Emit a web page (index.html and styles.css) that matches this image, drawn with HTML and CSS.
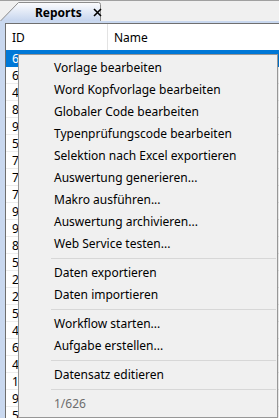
FILE: index.html
```html
<!DOCTYPE html>
<html lang="de">

<head>
    <meta charset="UTF-8">
    <meta name="viewport" content="width=device-width, initial-scale=1.0">
    <title>Reports</title>
    <link rel="stylesheet" href="styles.css">
</head>

<body>
    <div class="tabstrip">
        <div class="tab">
            <svg class="tab-shape" width="102" height="21" viewBox="0 0 102 21">
                <defs>
                    <linearGradient id="tabfill" x1="0" y1="0" x2="0" y2="1">
                        <stop offset="0" stop-color="#fdfdfe" />
                        <stop offset="1" stop-color="#c6d5ee" />
                    </linearGradient>
                </defs>
                <path d="M0.5 21 L18.5 2.5 H98.5 Q100.5 2.5 100.5 4.5 V21" fill="url(#tabfill)" stroke="#8c8c8c" />
            </svg>
            <span class="tab-title">Reports</span>
            <svg class="tab-close" width="9" height="9" viewBox="0 0 9 9">
                <path d="M1 1 L8 8 M8 1 L1 8" stroke="#000" stroke-width="1.6" />
            </svg>
        </div>
    </div>

    <div class="frame">
        <div class="grid">
            <div class="grid-head">
                <div class="col-id">ID</div>
                <div class="col-name">Name</div>
            </div>
            <div class="row selected"><span>6</span></div>
            <div class="row"><span>6</span></div>
            <div class="row"><span>4</span></div>
            <div class="row"><span>8</span></div>
            <div class="row"><span>9</span></div>
            <div class="row"><span>5</span></div>
            <div class="row"><span>7</span></div>
            <div class="row"><span>7</span></div>
            <div class="row"><span>7</span></div>
            <div class="row"><span>9</span></div>
            <div class="row"><span>9</span></div>
            <div class="row"><span>8</span></div>
            <div class="row"><span>5</span></div>
            <div class="row"><span>2</span></div>
            <div class="row"><span>2</span></div>
            <div class="row"><span>5</span></div>
            <div class="row"><span>4</span></div>
            <div class="row"><span>6</span></div>
            <div class="row"><span>4</span></div>
            <div class="row"><span>1</span></div>
            <div class="row"><span>9</span></div>
            <div class="row"><span>5</span></div>
        </div>
    </div>

    <ul class="menu">
        <li>Vorlage bearbeiten</li>
        <li>Word Kopfvorlage bearbeiten</li>
        <li>Globaler Code bearbeiten</li>
        <li>Typenprüfungscode bearbeiten</li>
        <li>Selektion nach Excel exportieren</li>
        <li>Auswertung generieren...</li>
        <li>Makro ausführen...</li>
        <li>Auswertung archivieren...</li>
        <li>Web Service testen...</li>
        <li class="sep"></li>
        <li>Daten exportieren</li>
        <li>Daten importieren</li>
        <li class="sep"></li>
        <li>Workflow starten...</li>
        <li>Aufgabe erstellen...</li>
        <li class="sep"></li>
        <li>Datensatz editieren</li>
        <li class="sep"></li>
        <li class="disabled">1/626</li>
    </ul>
</body>

</html>
```

FILE: styles.css
```css
* {
    box-sizing: border-box;
}

html,
body {
    height: 100%;
    overflow: hidden;
}

body {
    margin: 0;
    font-family: "Noto Sans", "Open Sans", sans-serif;
    font-size: 12px;
    color: #000;
    background-color: #f0f0f0;
    position: relative;
}

/* tab strip */

.tabstrip {
    height: 21px;
    border-top: 1px solid #a0a0a0;
    background-color: #f0f0f0;
}

.tab {
    position: relative;
    display: flex;
    align-items: center;
    width: 102px;
    height: 20px;
}

.tab-shape {
    position: absolute;
    left: 0;
    bottom: 0;
}

.tab-title {
    position: relative;
    margin-left: 35px;
    margin-top: 2px;
    font-weight: bold;
}

.tab-close {
    position: relative;
    margin-left: 11px;
    margin-top: 3px;
}

/* frame round the grid */

.frame {
    padding: 2px 0 0 5px;
    background-color: #c9d8ef;
    height: 100%;
}

.grid {
    height: 100%;
    background-color: #fff;
    border-top: 1px solid #6f6f6f;
    border-left: 1px solid #6f6f6f;
}

.grid-head {
    display: flex;
    height: 26px;
    align-items: center;
}

.col-id {
    width: 102px;
    padding-left: 6px;
    align-self: stretch;
    display: flex;
    align-items: center;
    border-right: 1px solid #e3e3e3;
}

.col-name {
    padding-left: 6px;
}

.row {
    display: flex;
    align-items: center;
    height: 17px;
    padding-left: 6px;
    border-bottom: 1px solid #ececec;
}

.row.selected {
    background-color: #0078d7;
    color: #fff;
    border-bottom-color: #0078d7;
}

/* context menu */

.menu {
    position: absolute;
    left: 18px;
    top: 54px;
    width: 260px;
    margin: 0;
    padding: 2px 0;
    list-style: none;
    background-color: #f0f0f0;
    border: 1px solid #979797;
    box-shadow: 1px 1px 2px rgba(0, 0, 0, 0.15);
}

.menu li {
    height: 22px;
    line-height: 22px;
    padding-left: 35px;
    white-space: nowrap;
}

.menu li.sep {
    height: 7px;
    margin-left: 32px;
    margin-right: 1px;
    padding: 0;
    border-top: 3px solid #f0f0f0;
    background: linear-gradient(#d7d7d7, #d7d7d7) 0 0 / 100% 1px no-repeat;
}

.menu li.disabled {
    color: #6d6d6d;
}
```
